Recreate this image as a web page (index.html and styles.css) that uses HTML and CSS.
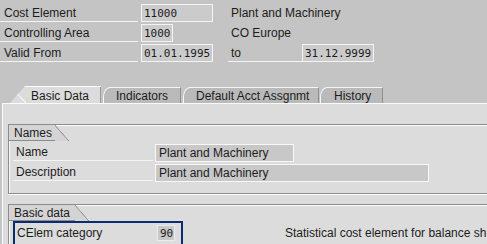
FILE: index.html
```html
<!DOCTYPE html>
<html>
<head>
<meta charset="utf-8">
<link rel="stylesheet" href="styles.css">
</head>
<body>
<div class="header">
  <div class="row">
    <div class="lbl">Cost Element</div>
    <div class="fcell"><div class="box w72">11000</div></div>
    <div class="txt">Plant and Machinery</div>
  </div>
  <div class="row">
    <div class="lbl">Controlling Area</div>
    <div class="fcell"><div class="box w32">1000</div></div>
    <div class="txt">CO Europe</div>
  </div>
  <div class="row">
    <div class="lbl">Valid From</div>
    <div class="fcell"><div class="box w72">01.01.1995</div></div>
    <div class="lbl lbl-to">to</div>
    <div class="box w72">31.12.9999</div>
  </div>
</div>

<div class="tabs">
  <div class="tab active">Basic Data</div>
  <div class="tab t-ind">Indicators</div>
  <div class="tab t-def">Default Acct Assgnmt</div>
  <div class="tab t-his">History</div>
</div>

<div class="panel">
  <div class="group">
    <div class="gtitle">Names</div>
    <div class="grow">
      <div class="glbl">Name</div>
      <div class="gbox w139">Plant and Machinery</div>
    </div>
    <div class="grow">
      <div class="glbl">Description</div>
      <div class="gbox w274">Plant and Machinery</div>
    </div>
  </div>
  <div class="group group2">
    <div class="gtitle gt2">Basic data</div>
    <div class="brow">
      <div class="sel">
        <div class="slbl">CElem category</div>
        <div class="sbox">90</div>
      </div>
      <div class="desc">Statistical cost element for balance sh</div>
    </div>
  </div>
</div>
</body>
</html>
```

FILE: styles.css
```css
html, body {
  margin: 0;
  padding: 0;
}
body {
  width: 487px;
  height: 244px;
  overflow: hidden;
  background: #c4c4c4;
  color: #1c1c1c;
  font-family: "Liberation Sans", Arial, sans-serif;
  font-size: 12px;
}
.header {
  padding-top: 3px;
}
.row {
  display: flex;
  height: 20px;
}
.lbl {
  width: 138px;
  height: 19px;
  box-sizing: border-box;
  border-bottom: 1px solid #f4f4f4;
  padding: 3px 0 0 4px;
  line-height: 15px;
  white-space: nowrap;
}
.fcell {
  width: 87px;
  margin-left: 3px;
}
.box {
  height: 18px;
  margin-top: 1px;
  box-sizing: border-box;
  border: 1px solid #f4f4f4;
  background: #cbcbcb;
  font-family: "DejaVu Sans Mono", monospace;
  font-size: 11px;
  line-height: 15px;
  padding: 1px 0 0 2px;
  white-space: nowrap;
}
.w72 { width: 72px; }
.w32 { width: 32px; }
.txt {
  padding: 3px 0 0 3px;
  line-height: 15px;
  white-space: nowrap;
}
.lbl-to {
  width: 74px;
  padding-left: 3px;
}

/* tabs */
.tabs {
  display: flex;
  margin-top: 23px;
  padding-left: 10px;
  height: 17px;
  align-items: flex-end;
}
.tab {
  position: relative;
  height: 17px;
  box-sizing: border-box;
  line-height: 15px;
  white-space: nowrap;
}
.tab.active {
  width: 91px;
  background: #dcdcdc;
  padding: 2px 0 0 21px;
  clip-path: polygon(15px 0, 100% 0, 100% 100%, 0 100%);
  border-top: 1px solid #fbfbfb;
}
.tab.active::before {
  content: "";
  position: absolute;
  left: 0;
  top: -1px;
  width: 16px;
  height: 17px;
  background: linear-gradient(to top right, transparent calc(50% - 1px), #fbfbfb 50%, transparent calc(50% + 1px));
}
.tab.active::after {
  content: "";
  position: absolute;
  right: 0;
  top: 0;
  width: 1px;
  height: 16px;
  background: #9a9a9a;
}
.tab.t-ind, .tab.t-def, .tab.t-his {
  background: #bababa;
  border-top: 1px solid #f6f6f6;
  border-left: 1px solid #f6f6f6;
  border-right: 1px solid #8e8e8e;
  border-top-left-radius: 7px 10px;
  padding: 1px 0 0 12px;
  height: 16px;
  margin-left: 2px;
}
.tab.t-ind { width: 78px; }
.tab.t-def { width: 136px; margin-left: 2px; }
.tab.t-his { width: 63px; margin-left: 1px; padding-left: 13px; }

/* panel */
.panel {
  margin-left: 2px;
  border-top: 1px solid #fbfbfb;
  border-left: 1px solid #fbfbfb;
  background: #dcdcdc;
  height: 141px;
  box-sizing: border-box;
  padding: 20px 0 0 5px;
  overflow: hidden;
}
.group {
  border: 1px solid #8c8c8c;
  border-right: none;
  box-shadow: inset 1px 1px 0 #fbfbfb, 0 1px 0 #fbfbfb;
  padding-bottom: 10px;
}
.group2 {
  margin-top: 10px;
  padding-bottom: 0;
}
.gtitle {
  position: relative;
  width: 46px;
  height: 16px;
  box-sizing: border-box;
  border-bottom: 1px solid #8c8c8c;
  background: #d4d4d4;
  padding: 1px 0 0 5px;
  line-height: 14px;
  white-space: nowrap;
}
.gtitle::after {
  content: "";
  position: absolute;
  left: 100%;
  top: 0;
  width: 14px;
  height: 16px;
  background: linear-gradient(to top right, #d4d4d4 calc(50% - 1px), #8c8c8c 50%, transparent calc(50% + 0.5px));
}
.gt2 { width: 66px; }
.grow {
  display: flex;
  height: 20px;
  padding-left: 4px;
  margin-top: 2px;
}
.grow + .grow { margin-top: 0; }
.glbl {
  width: 140px;
  height: 18px;
  box-sizing: border-box;
  border-bottom: 1px solid #f4f4f4;
  padding: 2px 0 0 3px;
  line-height: 15px;
}
.gbox {
  margin-left: 2px;
  margin-top: 1px;
  height: 18px;
  box-sizing: border-box;
  border: 1px solid #f8f8f8;
  background: #c8c8c8;
  padding: 1px 0 0 3px;
  line-height: 15px;
  white-space: nowrap;
}
.w139 { width: 139px; }
.w274 { width: 274px; }
.brow {
  display: flex;
  padding-left: 4px;
}
.sel {
  display: flex;
  flex: none;
  width: 170px;
  height: 24px;
  box-sizing: border-box;
  border: 2px solid #0e2a72;
  border-bottom: none;
  padding-top: 2px;
}
.slbl {
  width: 140px;
  padding: 1px 0 0 2px;
  line-height: 15px;
}
.sbox {
  width: 18px;
  height: 16px;
  box-sizing: border-box;
  border: 1px solid #ececec;
  background: #c8c8c8;
  font-family: "DejaVu Sans Mono", monospace;
  font-size: 11px;
  line-height: 13px;
  padding: 1px 0 0 2px;
}
.desc {
  margin-left: 102px;
  padding-top: 5px;
  line-height: 15px;
  white-space: nowrap;
  overflow: hidden;
}
```
